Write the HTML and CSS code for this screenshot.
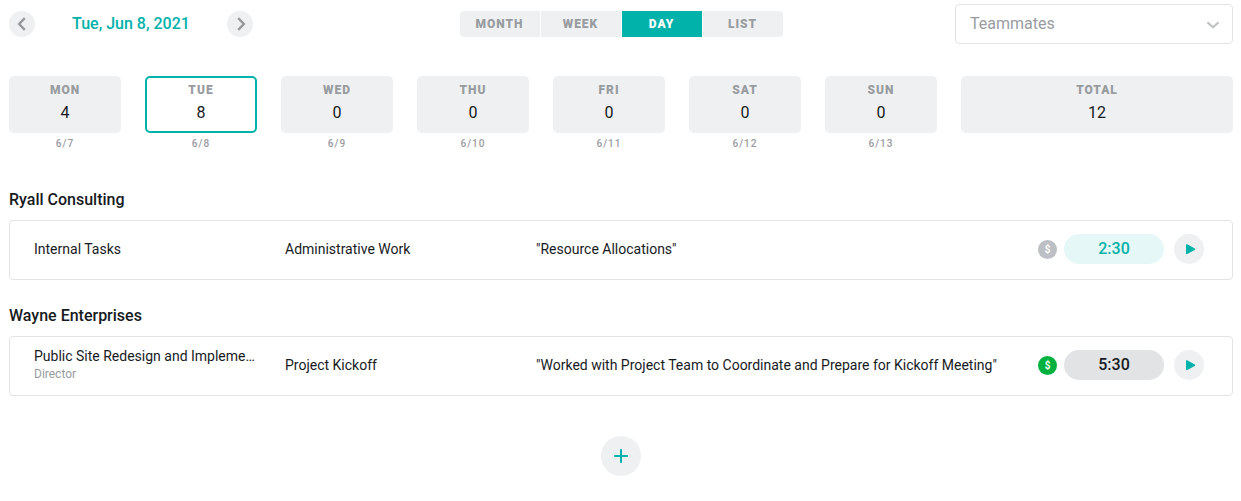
FILE: index.html
```html
<!DOCTYPE html>
<html lang="en">
<head>
<meta charset="utf-8">
<meta name="viewport" content="width=device-width, initial-scale=1">
<title>Timesheet</title>
<link rel="stylesheet" href="styles.css">
</head>
<body>
<main class="page">
  <header class="toolbar">
    <div class="date-nav">
      <button class="round round-small" type="button" aria-label="Previous day">
        <svg width="26" height="26" viewBox="0 0 26 26"><path class="chevron" d="M15.8 7.2 10.2 13l5.6 5.8"/></svg>
      </button>
      <button class="date" type="button">Tue, Jun 8, 2021</button>
      <button class="round round-small" type="button" aria-label="Next day">
        <svg width="26" height="26" viewBox="0 0 26 26"><path class="chevron" d="M11.2 7.2 16.8 13l-5.6 5.8"/></svg>
      </button>
    </div>
    <div class="views">
      <button class="view" type="button">MONTH</button>
      <button class="view" type="button">WEEK</button>
      <button class="view view-active" type="button" aria-pressed="true">DAY</button>
      <button class="view" type="button">LIST</button>
    </div>
    <div class="picker">
      <select class="picker-select" aria-label="Teammates"><option>Teammates</option></select>
      <svg class="picker-arrow" width="14" height="10" viewBox="0 0 14 10" aria-hidden="true"><path d="M1.4 2.2 7 7.2l5.6-5"/></svg>
    </div>
  </header>

  <section class="days">
    <div class="day"><button class="tile" type="button"><span class="tile-name">MON</span><span class="tile-hours">4</span></button><span class="day-date">6/7</span></div>
    <div class="day"><button class="tile tile-active" type="button"><span class="tile-name">TUE</span><span class="tile-hours">8</span></button><span class="day-date">6/8</span></div>
    <div class="day"><button class="tile" type="button"><span class="tile-name">WED</span><span class="tile-hours">0</span></button><span class="day-date">6/9</span></div>
    <div class="day"><button class="tile" type="button"><span class="tile-name">THU</span><span class="tile-hours">0</span></button><span class="day-date">6/10</span></div>
    <div class="day"><button class="tile" type="button"><span class="tile-name">FRI</span><span class="tile-hours">0</span></button><span class="day-date">6/11</span></div>
    <div class="day"><button class="tile" type="button"><span class="tile-name">SAT</span><span class="tile-hours">0</span></button><span class="day-date">6/12</span></div>
    <div class="day"><button class="tile" type="button"><span class="tile-name">SUN</span><span class="tile-hours">0</span></button><span class="day-date">6/13</span></div>
    <div class="day"><div class="tile"><span class="tile-name">TOTAL</span><span class="tile-hours">12</span></div></div>
  </section>

  <section class="client">
    <h2 class="client-name">Ryall Consulting</h2>
    <article class="entry">
      <div class="cell"><div class="line">Internal Tasks</div></div>
      <div class="cell"><div class="line">Administrative Work</div></div>
      <div class="cell"><div class="line">"Resource Allocations"</div></div>
      <div class="actions">
        <span class="bill">$</span>
        <button class="time time-open" type="button">2:30</button>
        <button class="round round-medium" type="button" aria-label="Start timer">
          <svg width="30" height="30" viewBox="0 0 30 30"><path class="play" d="M12.8 11v8.4l7.6-4.2z"/></svg>
        </button>
      </div>
    </article>
  </section>

  <section class="client">
    <h2 class="client-name">Wayne Enterprises</h2>
    <article class="entry">
      <div class="cell"><div class="line">Public Site Redesign and Impleme…</div><div class="role">Director</div></div>
      <div class="cell"><div class="line">Project Kickoff</div></div>
      <div class="cell"><div class="line">"Worked with Project Team to Coordinate and Prepare for Kickoff Meeting"</div></div>
      <div class="actions">
        <span class="bill bill-on">$</span>
        <button class="time" type="button">5:30</button>
        <button class="round round-medium" type="button" aria-label="Start timer">
          <svg width="30" height="30" viewBox="0 0 30 30"><path class="play" d="M12.8 11v8.4l7.6-4.2z"/></svg>
        </button>
      </div>
    </article>
  </section>

  <footer class="add">
    <button class="round round-large" type="button" aria-label="Add entry">
      <svg width="40" height="40" viewBox="0 0 40 40"><path class="plus" d="M20 13.2v13.6M13.2 20h13.6"/></svg>
    </button>
  </footer>
</main>
</body>
</html>
```

FILE: styles.css
```css
* {
  box-sizing: border-box;
}

body {
  margin: 0;
  background: #fff;
  color: #171b1e;
  font-family: Roboto, "Liberation Sans", sans-serif;
  font-size: 14px;
  line-height: 18px;
}

button,
select {
  margin: 0;
  padding: 0;
  border: 0;
  background: none;
  color: inherit;
  font: inherit;
  cursor: pointer;
}

svg {
  display: block;
  fill: none;
}

.page {
  padding: 4px 8px 24px 9px;
}

.toolbar {
  display: grid;
  grid-template-columns: 1fr auto 1fr;
  align-items: center;
}

.date-nav {
  display: flex;
  align-items: center;
  justify-content: space-between;
  width: 244px;
}

.date {
  color: #00b2a9;
  font-size: 16px;
  font-weight: 500;
}

.round {
  flex: none;
  border-radius: 50%;
  background: #eff0f2;
}

.round-small {
  width: 26px;
  height: 26px;
}

.round-medium {
  width: 30px;
  height: 30px;
}

.round-large {
  width: 40px;
  height: 40px;
}

.chevron {
  stroke: #96999c;
  stroke-width: 2.4;
}

.play {
  fill: #00b2a9;
  stroke: #00b2a9;
  stroke-width: 1.6;
  stroke-linejoin: round;
}

.plus {
  stroke: #00b2a9;
  stroke-width: 2;
}

.views {
  display: flex;
  gap: 1px;
  overflow: hidden;
  border-radius: 4px;
}

.view {
  width: 80px;
  height: 26px;
  background: #eff0f2;
  color: #989c9f;
  font-size: 12px;
  font-weight: 900;
  letter-spacing: 1px;
}

.view-active {
  background: #00b2a9;
  color: #fff;
}

.picker {
  position: relative;
  justify-self: end;
  width: 278px;
}

.picker-select {
  width: 100%;
  height: 40px;
  padding: 0 40px 0 14px;
  border: 1px solid #e2e3e5;
  border-radius: 4px;
  appearance: none;
  background: #fff;
  color: #989c9f;
  font-size: 16px;
}

.picker-arrow {
  position: absolute;
  top: 16px;
  right: 13px;
  stroke: #bfc2c5;
  stroke-width: 2.2;
  pointer-events: none;
}

.days {
  display: grid;
  grid-template-columns: repeat(7, 7fr) 17fr;
  gap: 24px;
  margin: 32px 0 39px;
}

.day {
  display: flex;
  flex-direction: column;
  gap: 4px;
  text-align: center;
}

.tile {
  display: flex;
  flex-direction: column;
  align-items: center;
  gap: 5px;
  height: 57px;
  padding: 4px 0;
  border: 2px solid transparent;
  border-radius: 5px;
  background: #eff0f2 border-box;
}

.tile-active {
  border-color: #00b2a9;
  background: #fff;
}

.tile-name {
  color: #989c9f;
  font-size: 12px;
  font-weight: 900;
  line-height: 16px;
  letter-spacing: 1px;
}

.tile-hours {
  font-size: 16px;
  line-height: 20px;
}

.day-date {
  color: #989c9f;
  font-size: 10px;
  font-weight: 500;
  line-height: 14px;
  letter-spacing: 1px;
}

.client {
  margin-bottom: 26px;
}

.client-name {
  margin: 0 0 10px;
  font-size: 16px;
  font-weight: 500;
  line-height: 20px;
}

.entry {
  display: grid;
  grid-template-columns: 1fr 1fr 2fr auto;
  align-items: center;
  min-height: 60px;
  padding: 8px 28px 10px 24px;
  border: 1px solid #e2e3e5;
  border-radius: 4px;
}

.cell {
  min-width: 0;
  padding-right: 24px;
}

.line {
  overflow: hidden;
  text-overflow: ellipsis;
  white-space: nowrap;
}

.role {
  color: #989c9f;
  font-size: 12px;
  line-height: 18px;
}

.actions {
  display: flex;
  align-items: center;
}

.bill {
  width: 19px;
  height: 19px;
  margin-right: 7px;
  border-radius: 50%;
  background: #bcbfc3;
  color: #fff;
  font-size: 10px;
  font-weight: 700;
  line-height: 19px;
  text-align: center;
}

.bill-on {
  background: #00b140;
}

.time {
  width: 100px;
  height: 30px;
  margin-right: 10px;
  border-radius: 15px;
  background: #e2e3e5;
  font-size: 16px;
  font-weight: 500;
}

.time-open {
  background: #e5f7f6;
  color: #00b2a9;
}

.add {
  display: flex;
  justify-content: center;
  padding-top: 14px;
}
```
